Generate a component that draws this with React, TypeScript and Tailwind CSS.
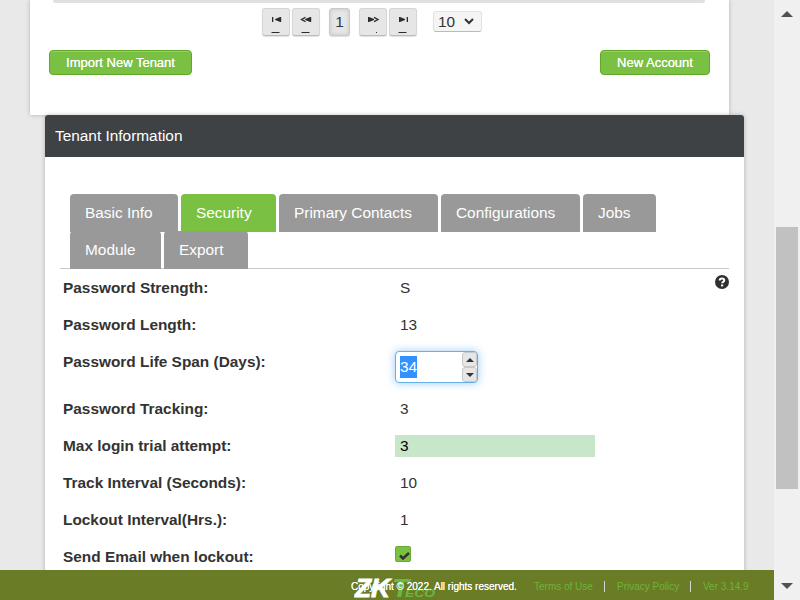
import React from "react";

const pagerButton =
  "flex h-7 w-7 flex-col items-center rounded-[3px] border border-[#d6d6d6] border-b-[#bcbcbc] bg-[#e6e6e6] text-[#333] shadow-[0_1px_1px_rgba(0,0,0,0.12)]";

const greenButton =
  "h-[25px] rounded-[4px] border border-[#62a92b] bg-[#7ac143] text-center text-[13px] leading-[23px] text-white [text-shadow:0_0_0.4px_#fff] shadow-[inset_0_1px_0_#97d163] whitespace-nowrap";

function PagerIcon({ kind }: { kind: "first" | "prev" | "next" | "last" }) {
  return (
    <svg width="26" height="26" viewBox="0 0 26 26" fill="#2c2c2c">
      {kind === "first" && <path d="M9 8h1.300v5H9zM18.200 8v5h-1l-5-2v-1l5-2zM8.500 23h8v1h-8z" />}
      {kind === "prev" && (
        <>
          <path d="M18.200 8v5h-1l-5-2v-1l5-2zM8.500 23h8v1h-8z" />
          <path d="M12.500 8.400 8.500 10.500l4 2.100" fill="none" stroke="#2c2c2c" strokeWidth="1.300" />
        </>
      )}
      {kind === "next" && (
        <>
          <path d="M8 8v5h1l5-2v-1L9 8zM16 23h1v1h-1z" />
          <path d="m14 8.400 4 2.100-4 2.100" fill="none" stroke="#2c2c2c" strokeWidth="1.300" />
        </>
      )}
      {kind === "last" && <path d="M16.700 8H18v5h-1.300zM9 8v5h1l5-2v-1l-5-2zM8.500 23h8v1h-8z" />}
    </svg>
  );
}

function Tab({ label, size, active = false }: { label: string; size: string; active?: boolean }) {
  return (
    <div
      className={`h-[38px] shrink-0 rounded-t-[4px] pl-[15px] text-[15.4px] leading-[37px] text-white whitespace-nowrap ${size} ${
        active ? "bg-[#7ac143]" : "bg-[#999]"
      }`}
    >
      {label}
    </div>
  );
}

function Row({
  label,
  height = "h-[37px]",
  children,
}: {
  label: string;
  height?: string;
  children: React.ReactNode;
}) {
  return (
    <div className={`flex shrink-0 items-start ${height}`}>
      <div className="w-[332px] shrink-0 text-[15.4px] leading-[22px] font-bold whitespace-nowrap">{label}</div>
      {children}
    </div>
  );
}

function Value({ children }: { children: React.ReactNode }) {
  return <div className="pl-[5px] text-[15.4px] leading-[22px]">{children}</div>;
}

function Spinner() {
  return (
    <div className="flex h-8 w-[83px] justify-between rounded-[4px] border border-[#66afe9] bg-white shadow-[0_0_8px_rgba(82,168,236,0.6)]">
      <span className="mt-1 ml-1 h-[22px] bg-[#3390ff] text-[15.4px] leading-[22px] text-white">34</span>
      <div className="flex flex-col">
        <div className="flex h-[15px] w-[15px] items-center justify-center rounded-[3px] border border-[#c8c8c8] bg-[#e6e6e6]">
          <svg width="8" height="4" viewBox="0 0 8 4" fill="#333"><path d="M0 4 4 0l4 4z" /></svg>
        </div>
        <div className="flex h-[15px] w-[15px] items-center justify-center rounded-[3px] border border-[#c8c8c8] bg-[#e6e6e6]">
          <svg width="8" height="4" viewBox="0 0 8 4" fill="#333"><path d="m0 0 4 4 4-4z" /></svg>
        </div>
      </div>
    </div>
  );
}

function Footer() {
  return (
    <footer className="relative flex h-[30px] shrink-0 items-center bg-[#6a7c25] pt-[3px] pl-[351px] text-[10px] text-[#6fb33a]">
      <span className="relative z-10 w-[183px] shrink-0 whitespace-nowrap text-white [text-shadow:0_0_0.4px_#fff]">
        Copyright © 2022. All rights reserved.
      </span>
      <span className="w-[70px] shrink-0 whitespace-nowrap">Terms of Use</span>
      <span className="h-[11px] w-px bg-[#d6d6d6]" />
      <span className="ml-3 w-[73px] shrink-0 whitespace-nowrap">Privacy Policy</span>
      <span className="h-[11px] w-px bg-[#d6d6d6]" />
      <span className="ml-3 whitespace-nowrap">Ver 3.14.9</span>
      <svg className="absolute top-2 left-[354px]" width="84" height="22" viewBox="0 0 84 22" fontFamily="Liberation Sans, sans-serif" fontWeight="bold" fontStyle="italic">
        <text x="1" y="19" fontSize="25" fill="#fff" stroke="#fff" strokeWidth="0.8" textLength="35" lengthAdjust="spacingAndGlyphs">ZK</text>
        <text x="38" y="19" fontSize="25" fill="#69b83f" textLength="17" lengthAdjust="spacingAndGlyphs">T</text>
        <text x="51" y="18.500" fontSize="10.500" fill="#69b83f" textLength="30" lengthAdjust="spacingAndGlyphs">ECO</text>
      </svg>
    </footer>
  );
}

export default function App() {
  return (
    <div className="flex h-[600px] w-[800px] overflow-hidden bg-[#e9e9e9] font-['Liberation_Sans',Arial,sans-serif] text-[#333]">
      <div className="flex w-[774px] flex-col">
        <main className="h-[570px] overflow-hidden">
          <section className="ml-[30px] h-[115px] w-[699px] bg-white shadow-[0_0_4px_rgba(0,0,0,0.25)]">
            <div className="mx-[23px] h-[3px] w-[652px] rounded-b-[6px] bg-[#e0e0e0]" />
            <div className="flex pt-[5px] pl-[232px]">
              <div className={pagerButton}><PagerIcon kind="first" /></div>
              <div className={`ml-[2px] ${pagerButton}`}><PagerIcon kind="prev" /></div>
              <div className="ml-[9px] h-7 w-[21px] rounded-[3px] border border-[#c9c9c9] bg-[#e6e6e6] text-center text-[15.4px] leading-[26px] text-[#2b3350] shadow-[inset_0_0_4px_rgba(0,0,0,0.15),0_1px_1px_rgba(0,0,0,0.12)]">1</div>
              <div className={`ml-[9px] ${pagerButton}`}><PagerIcon kind="next" /></div>
              <div className={`ml-[2px] ${pagerButton}`}><PagerIcon kind="last" /></div>
              <div className="mt-[3px] ml-4 flex h-[21px] w-[49px] items-center justify-between rounded-[3px] border border-[#e2e2e2] border-b-[#bbb] bg-[#f5f5f5] pr-[7px] pl-1 text-[15.4px] leading-5">
                <span>10</span>
                <svg width="10" height="7" viewBox="0 0 10 7" fill="none" stroke="#333" strokeWidth="2"><path d="m1 1 4 4 4-4" /></svg>
              </div>
            </div>
            <div className="mt-[14px] ml-[19px] flex w-[661px] justify-between">
              <div className={`w-[143px] ${greenButton}`}>Import New Tenant</div>
              <div className={`w-[110px] ${greenButton}`}>New Account</div>
            </div>
          </section>

          <section className="relative ml-[45px] h-[600px] w-[699px] rounded-t-[3px] bg-white shadow-[0_0_4px_rgba(0,0,0,0.25)]">
            <h2 className="h-[42px] rounded-t-[3px] bg-[#3e4245] pl-[10px] text-[15.4px] leading-[42px] text-white">Tenant Information</h2>
            <div className="mx-[15px] mt-[37px] border-b border-[#c8c8c8] pl-[10px]">
              <div className="flex gap-[3px]">
                <Tab label="Basic Info" size="w-[108px]" />
                <Tab label="Security" size="w-[95px]" active />
                <Tab label="Primary Contacts" size="w-[159px]" />
                <Tab label="Configurations" size="w-[139px]" />
                <Tab label="Jobs" size="w-[73px]" />
              </div>
              <div className="-mt-px -mb-px flex gap-[3px]">
                <Tab label="Module" size="w-[91px]" />
                <Tab label="Export" size="w-[84px]" />
              </div>
            </div>
            <div className="flex justify-between pt-[8px] pr-[15px] pl-[18px]">
              <div className="flex flex-col">
                <Row label="Password Strength:"><Value>S</Value></Row>
                <Row label="Password Length:"><Value>13</Value></Row>
                <Row label="Password Life Span (Days):" height="h-[47px]"><Spinner /></Row>
                <Row label="Password Tracking:"><Value>3</Value></Row>
                <Row label="Max login trial attempt:">
                  <div className="h-[22px] w-[200px] bg-[#c8e6c9] pl-[5px] text-[15.4px] leading-[22px] text-black">3</div>
                </Row>
                <Row label="Track Interval (Seconds):"><Value>10</Value></Row>
                <Row label="Lockout Interval(Hrs.):"><Value>1</Value></Row>
                <Row label="Send Email when lockout:">
                  <div className="flex h-4 w-4 items-center justify-center rounded-[2px] border border-[#68a936] bg-[#7ac143]">
                    <svg className="mt-[5px] ml-[2px]" width="11" height="9" viewBox="0 0 11 9" fill="none" stroke="#333" strokeWidth="2.500"><path d="m1 3.500 3 3L10 1" /></svg>
                  </div>
                </Row>
              </div>
              <svg className="-mt-[2px]" width="14" height="14" viewBox="0 0 14 14">
                <circle cx="7" cy="7" r="7" fill="#2d2f31" />
                <path d="M4.700 5.400C4.700 2.700 9.300 2.800 9.300 5.300 9.300 6.900 7.200 6.700 7.200 8.300" fill="none" stroke="#fff" strokeWidth="2" />
                <path d="M6 9.500h2.200v1.900H6z" fill="#fff" />
              </svg>
            </div>
          </section>
        </main>
        <Footer />
      </div>

      <aside className="flex w-[26px] flex-col items-center bg-[#f0f0f0]">
        <svg className="mt-[11px]" width="12" height="6" viewBox="0 0 12 6" fill="#505050"><path d="m0 6 6-6 6 6z" /></svg>
        <div className="mt-[210px] h-[262px] w-[22px] bg-[#c1c1c1]" />
        <svg className="mt-[94px]" width="12" height="6" viewBox="0 0 12 6" fill="#505050"><path d="m0 0 6 6 6-6z" /></svg>
      </aside>
    </div>
  );
}
